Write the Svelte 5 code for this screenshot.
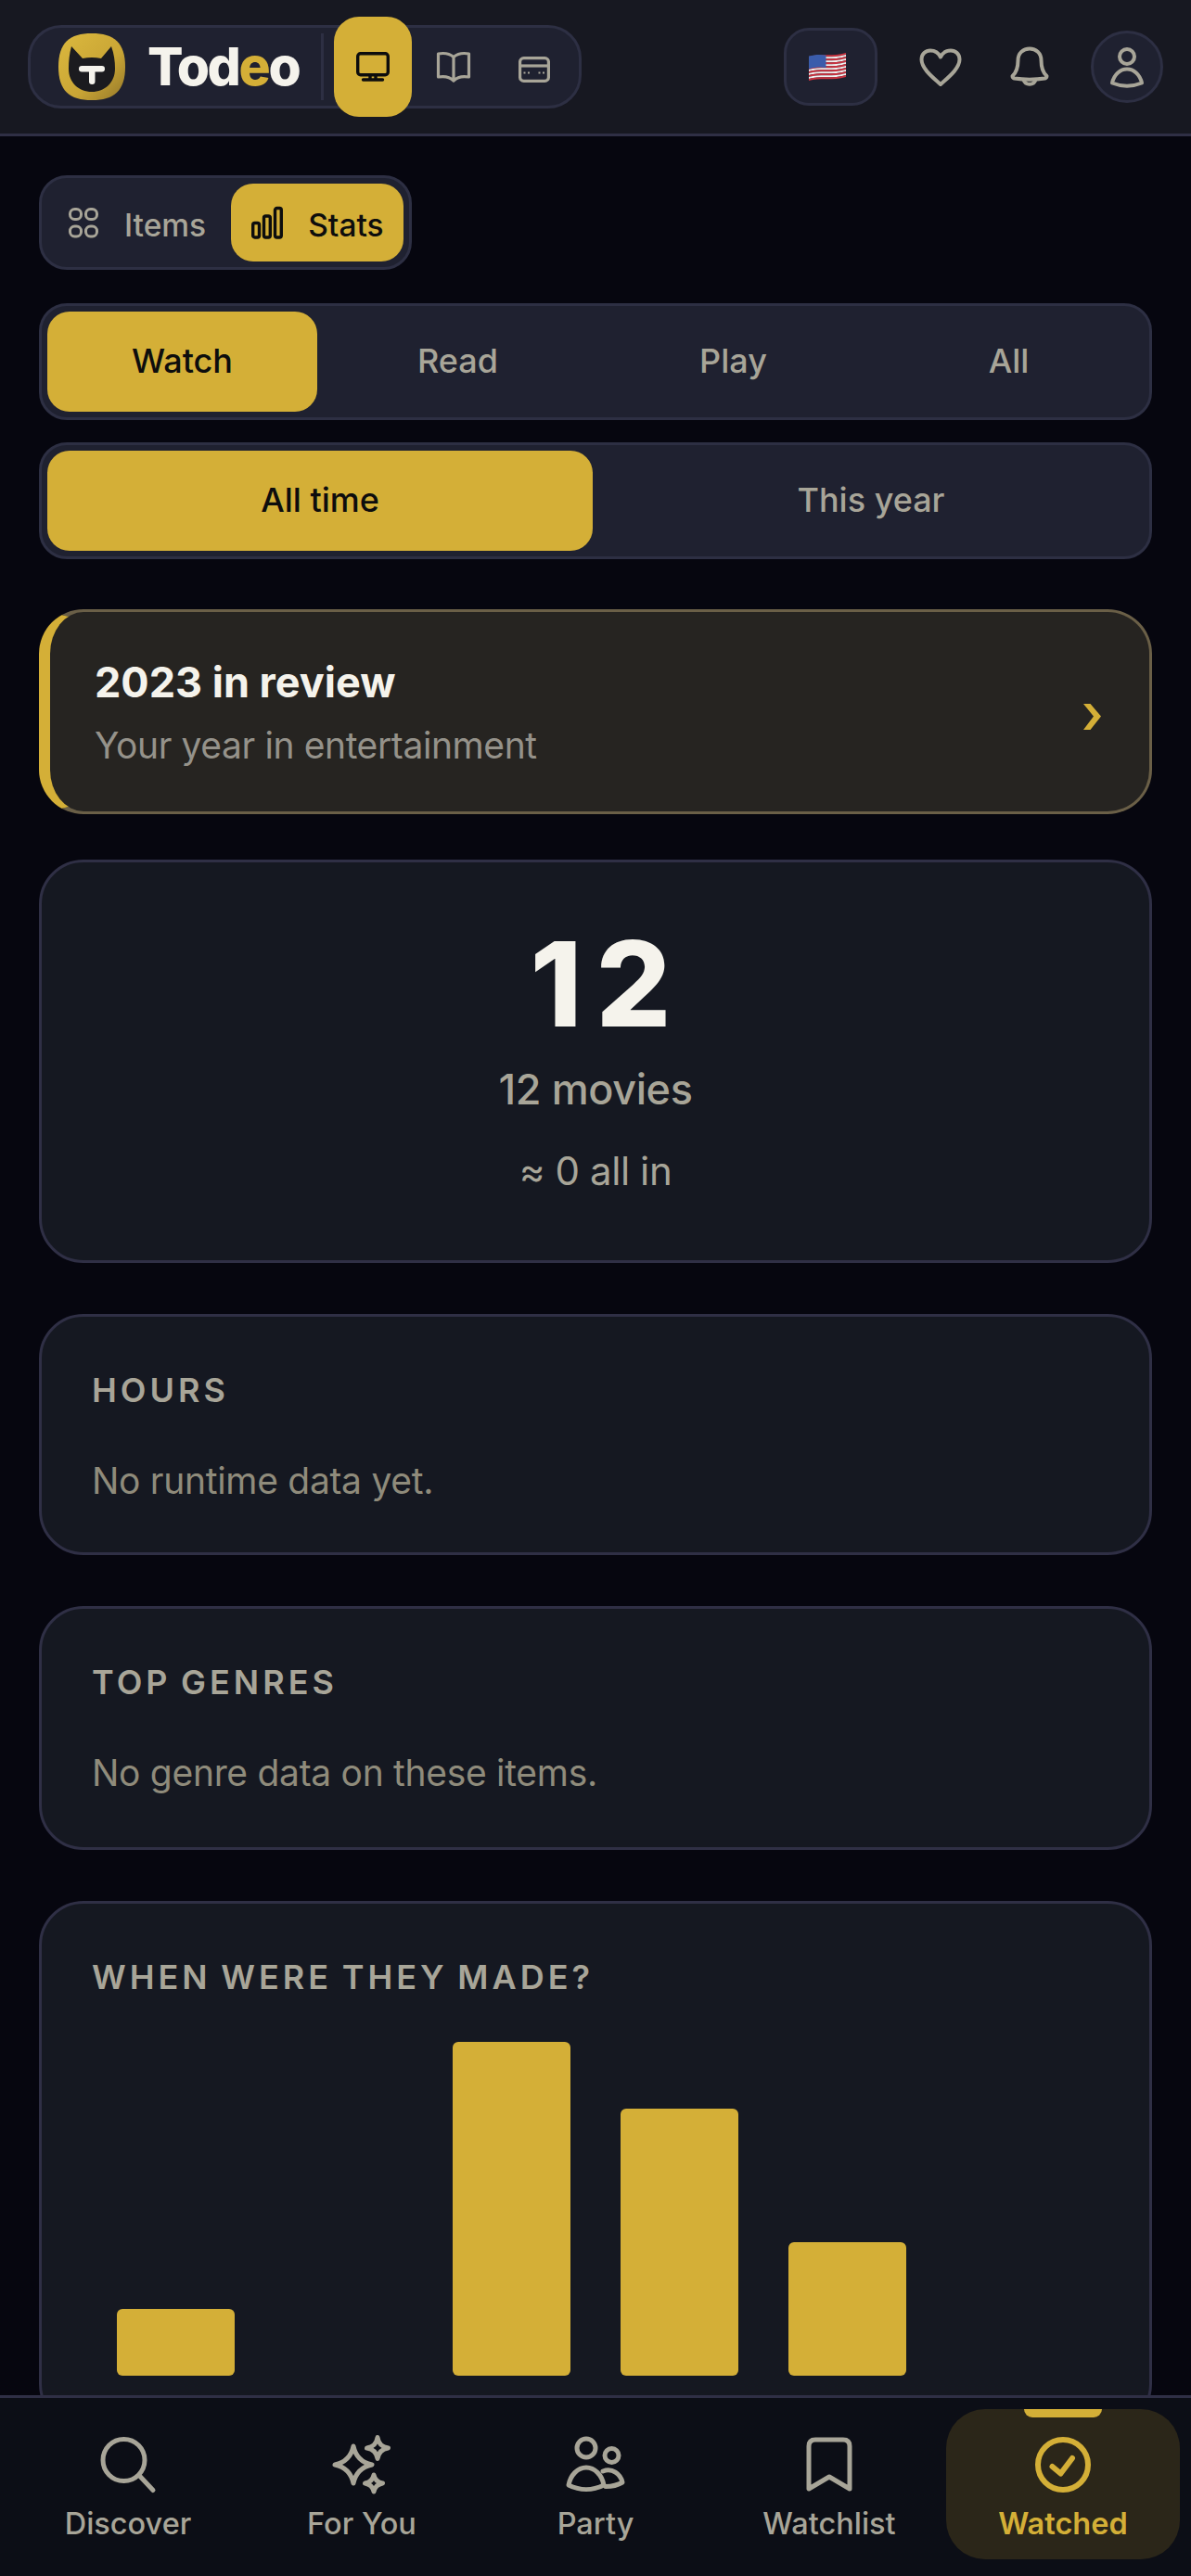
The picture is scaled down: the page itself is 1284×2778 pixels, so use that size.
<script>
  const kinds = [
    { label: 'Watch', active: true },
    { label: 'Read' },
    { label: 'Play' },
    { label: 'All' }
  ];
  const ranges = [{ label: 'All time', active: true }, { label: 'This year' }];
  // one column per decade, count of movies
  const decades = [1, 0, 5, 4, 2, 0];
  const unit = 72;

  // wavy stripes for the little flag
  const stripes = Array.from({ length: 13 }, (_, i) => {
    const y = 2 + i * 2;
    return {
      d: `M0 ${y + 2}C13 ${y - 1.6} 26 ${y + 2.4} 40 ${y - 2}V${y}C26 ${y + 4.4} 13 ${y + 0.4} 0 ${y + 4}Z`,
      fill: i % 2 ? '#f1eeee' : '#c9323f'
    };
  });
</script>

<div class="screen">
  <header class="top">
    <div class="brand">
      <svg class="logo" width="72" height="72" viewBox="0 0 72 72">
        <defs>
          <linearGradient id="lg" x1="0" y1="0" x2="1" y2="1">
            <stop offset="0" stop-color="#dcb93e" />
            <stop offset="0.6" stop-color="#c9a535" />
            <stop offset="1" stop-color="#94782a" />
          </linearGradient>
        </defs>
        <path d="M36 0C60 0 72 10 72 36C72 62 60 72 36 72C12 72 0 62 0 36C0 10 12 0 36 0Z" fill="url(#lg)" />
        <path d="M14 14L26 27Q36 25 46 27L57 14Q61 25 61 38C61 53 50 63 36 63C22 63 11 53 11 38Q11 25 14 14Z" fill="#1b1b1f" />
        <rect x="22" y="35" width="28" height="6.5" rx="3.2" fill="#f5f3ec" />
        <rect x="33" y="35" width="6.5" height="20" rx="3.2" fill="#f5f3ec" />
      </svg>
      <span class="word">Tod<span class="gold">e</span>o</span>
      <span class="rule"></span>
      <button class="mode on" aria-label="Watch">
        <svg width="48" height="48" viewBox="0 0 48 48" fill="none" stroke="#0d0d0d" stroke-width="3.4" stroke-linecap="round" stroke-linejoin="round">
          <rect x="7.7" y="9.7" width="32.6" height="23" rx="3" />
          <path d="M21 33v4.5M27 33v4.5M13.5 38h21" />
        </svg>
      </button>
      <button class="mode" aria-label="Read">
        <svg width="48" height="48" viewBox="0 0 48 48" fill="none" stroke="#a8a598" stroke-width="3.2" stroke-linejoin="round">
          <path d="M24 13.5C20 10 13 9 7.5 10V35C13 34 20 35 24 39C28 35 35 34 40.5 35V10C35 9 28 10 24 13.5ZM24 13.5V39" />
        </svg>
      </button>
      <button class="mode" aria-label="Play">
        <svg width="48" height="48" viewBox="0 0 48 48" fill="none" stroke="#a8a598" stroke-width="3.2">
          <rect x="8.6" y="14.6" width="30.8" height="24.8" rx="4" />
          <path d="M8.6 23H39.4" />
          <path d="M12.5 30.5h6.5M28.5 30.5h6.5" stroke-dasharray="2 2.5" stroke-width="2.2" />
        </svg>
      </button>
    </div>
    <div class="actions">
      <button class="flag" aria-label="Language">
        <svg width="40" height="30" viewBox="0 0 40 30">
          {#each stripes as s}
            <path d={s.d} fill={s.fill} />
          {/each}
          <path d="M0 3.6C6 1.8 13 1.6 18.5 2.6V16C13 15 6 15.4 0 17.4Z" fill="#3a5cab" />
        </svg>
      </button>
      <button class="plain heart" aria-label="Favourites">
        <svg width="54" height="54" viewBox="0 0 54 54" fill="none" stroke="#a8a598" stroke-width="4" stroke-linejoin="round">
          <path d="M27 46C20 39.5 6.5 29.5 6.5 19C6.5 13 11 9.5 16 9.5C21 9.5 25 12.5 27 16.5C29 12.5 33 9.5 38 9.5C43 9.5 47.5 13 47.5 19C47.5 29.5 34 39.5 27 46Z" />
        </svg>
      </button>
      <button class="plain bell" aria-label="Notifications">
        <svg width="54" height="54" viewBox="0 0 54 54" fill="none" stroke="#a8a598" stroke-width="4" stroke-linejoin="round" stroke-linecap="round">
          <path d="M8.5 37C13 33 14.5 28 14.5 20C14.5 12.5 20 7.5 27 7.5C34 7.5 39.5 12.5 39.5 20C39.5 28 41 33 45.5 37C45.5 38.5 45 39 43.5 39.5C33 41 21 41 10.5 39.5C9 39 8.5 38.5 8.5 37Z" />
          <path d="M20.5 41A6.8 6.8 0 0 0 33.5 41" />
        </svg>
      </button>
      <button class="avatar" aria-label="Profile">
        <svg width="54" height="54" viewBox="0 0 54 54" fill="none" stroke="#a8a598" stroke-width="4" stroke-linejoin="round">
          <circle cx="27" cy="16" r="8" />
          <path d="M11 44.5C13 35 20 29.5 27 29.5C34 29.5 41 35 43 44.5C33 48.5 21 48.5 11 44.5Z" />
        </svg>
      </button>
    </div>
  </header>

  <main class="page">
    <div class="switch">
      <button class="sw">
        <svg width="36" height="36" viewBox="0 0 36 36" fill="none" stroke="#a8a598" stroke-width="3">
          <rect x="3.5" y="3.5" width="12" height="11" rx="5" />
          <rect x="20.5" y="3.5" width="12" height="11" rx="5" />
          <rect x="3.5" y="22" width="12" height="11" rx="5" />
          <rect x="20.5" y="22" width="12" height="11" rx="5" />
        </svg>
        <span>Items</span>
      </button>
      <button class="sw on">
        <svg width="36" height="36" viewBox="0 0 36 36" fill="none" stroke="#0d0d0d" stroke-width="3.4">
          <rect x="2.7" y="18.5" width="6.8" height="15.5" rx="2" />
          <rect x="14.5" y="11" width="6.8" height="23" rx="2" />
          <rect x="26.5" y="2.5" width="6.8" height="31.5" rx="2" />
        </svg>
        <span>Stats</span>
      </button>
    </div>

    <div class="seg first">
      {#each kinds as k}
        <button class:on={k.active}>{k.label}</button>
      {/each}
    </div>
    <div class="seg second">
      {#each ranges as r}
        <button class:on={r.active}>{r.label}</button>
      {/each}
    </div>

    <a class="review" href="#review">
      <div class="review-text">
        <div class="review-title">2023 in review</div>
        <div class="review-sub">Your year in entertainment</div>
      </div>
      <svg class="chev" width="19" height="28" viewBox="0 0 19 28">
        <path d="M0 0h7.5L19 13.5 7.5 28H0L11 13.5z" fill="#d4af37" />
      </svg>
    </a>

    <section class="card hero">
      <div class="big">12</div>
      <div class="count">12 movies</div>
      <div class="approx">≈ 0 all in</div>
    </section>

    <section class="card hours">
      <h2>Hours</h2>
      <p>No runtime data yet.</p>
    </section>

    <section class="card genres">
      <h2>Top genres</h2>
      <p>No genre data on these items.</p>
    </section>

    <section class="card made">
      <h2>When were they made?</h2>
      <div class="chart">
        {#each decades as n}
          <div class="col">
            {#if n}<div class="bar" style="height: {n * unit}px"></div>{/if}
          </div>
        {/each}
      </div>
    </section>
  </main>

  <nav class="tabs">
    <button class="tab">
      <svg width="72" height="72" viewBox="0 0 72 72" fill="none" stroke="#a8a598" stroke-width="5" stroke-linecap="round">
        <circle cx="31.5" cy="33" r="22.5" />
        <path d="M48.5 50L63 65.5" />
      </svg>
      <span>Discover</span>
    </button>
    <button class="tab">
      <svg width="72" height="72" viewBox="0 0 72 72" fill="none" stroke="#a8a598" stroke-width="5" stroke-linejoin="round">
        <path d="M27 18Q30.5 34.5 47 38Q30.5 41.5 27 58Q23.5 41.5 7 38Q23.5 34.5 27 18Z" />
        <path d="M53 8.5Q54.5 18.5 64.5 20Q54.5 21.5 53 31.5Q51.5 21.5 41.5 20Q51.5 18.5 53 8.5Z" />
        <path d="M49 49Q50.5 56.5 58.5 58Q50.5 59.5 49 67Q47.5 59.5 39.5 58Q47.5 56.5 49 49Z" />
      </svg>
      <span>For You</span>
    </button>
    <button class="tab">
      <svg width="72" height="72" viewBox="0 0 72 72" fill="none" stroke="#a8a598" stroke-width="5" stroke-linejoin="round" stroke-linecap="round">
        <circle cx="26" cy="20" r="10" />
        <circle cx="53.5" cy="28" r="7.5" />
        <path d="M7 60C9 49 17 41 26 41C35 41 43 49 45 60C33 66 19 66 7 60Z" />
        <path d="M44 45C54 41 63 48 65 57C60 60 54 61.5 47 61.5" />
      </svg>
      <span>Party</span>
    </button>
    <button class="tab">
      <svg width="72" height="72" viewBox="0 0 72 72" fill="none" stroke="#a8a598" stroke-width="5" stroke-linejoin="round">
        <path d="M14 64V18Q14 11 21 11H51Q58 11 58 18V64L36 51Z" />
      </svg>
      <span>Watchlist</span>
    </button>
    <button class="tab on">
      <i class="mark"></i>
      <svg width="72" height="72" viewBox="0 0 72 72" fill="none" stroke="#d4af37" stroke-width="6" stroke-linecap="round" stroke-linejoin="round">
        <circle cx="36" cy="38" r="27" />
        <path d="M24.5 40L33.5 47.5L46 31" />
      </svg>
      <span>Watched</span>
    </button>
  </nav>
</div>

<style>
  :global(body) {
    background: #06060f;
  }
  .screen {
    height: 2778px;
    display: flex;
    flex-direction: column;
    overflow: hidden;
    background: #06060f;
    font-family: Inter, "Liberation Sans", sans-serif;
    color: #a8a598;
  }
  button {
    font: inherit;
    color: inherit;
    background: none;
    border: 0;
    padding: 0;
  }
  svg {
    display: block;
    flex: none;
  }

  .top {
    flex: none;
    height: 147px;
    box-sizing: border-box;
    display: flex;
    align-items: center;
    justify-content: space-between;
    padding: 0 30px;
    background: #171821;
    border-bottom: 3px solid #2f2f45;
  }
  .brand {
    display: flex;
    align-items: center;
    box-sizing: border-box;
    width: 597px;
    height: 90px;
    padding-left: 30px;
    background: #1f2130;
    border: 3px solid #2d2f43;
    border-radius: 36px;
  }
  .word {
    margin-left: 24px;
    width: 164px;
    font-size: 57px;
    line-height: 72px;
    font-weight: 800;
    letter-spacing: -2.4px;
    color: #f5f3ec;
    white-space: nowrap;
  }
  .gold {
    color: #d4af37;
  }
  .rule {
    width: 3px;
    height: 72px;
    margin-left: 23px;
    margin-right: 11px;
    background: #2d2f43;
  }
  .mode {
    flex: none;
    width: 84px;
    height: 108px;
    margin-right: 3px;
    border-radius: 27px;
    display: flex;
    align-items: center;
    justify-content: center;
  }
  .mode.on {
    background: #d4af37;
  }
  .actions {
    display: flex;
    align-items: center;
  }
  .flag {
    box-sizing: border-box;
    width: 101px;
    height: 84px;
    display: flex;
    align-items: center;
    justify-content: center;
    padding-right: 8px;
    background: #1f2130;
    border: 3px solid #2d2f43;
    border-radius: 27px;
  }
  .plain {
    width: 54px;
    height: 54px;
  }
  .heart {
    margin-left: 41px;
  }
  .bell {
    margin-left: 42px;
  }
  .avatar {
    box-sizing: border-box;
    width: 78px;
    height: 78px;
    margin-left: 39px;
    display: flex;
    align-items: center;
    justify-content: center;
    background: #1f2130;
    border: 3px solid #2d2f43;
    border-radius: 50%;
  }

  .page {
    flex: 1;
    min-height: 0;
    overflow: hidden;
    padding: 42px 42px 0;
  }
  .switch {
    display: inline-flex;
    vertical-align: top;
    box-sizing: border-box;
    height: 102px;
    padding: 6px;
    gap: 6px;
    background: #1f2130;
    border: 3px solid #2d2f43;
    border-radius: 30px;
  }
  .sw {
    display: flex;
    align-items: center;
    gap: 26px;
    padding: 0 21px;
    border-radius: 24px;
    font-size: 33.5px;
    font-weight: 500;
  }
  .sw span {
    margin-top: 5px;
  }
  .sw.on {
    background: #d4af37;
    color: #0d0d0d;
  }

  .seg {
    display: flex;
    box-sizing: border-box;
    height: 126px;
    padding: 6px;
    gap: 6px;
    background: #1f2130;
    border: 3px solid #2d2f43;
    border-radius: 30px;
  }
  .seg.first {
    margin-top: 36px;
  }
  .seg.second {
    margin-top: 24px;
  }
  .seg button {
    flex: 1;
    padding-bottom: 3px;
    border-radius: 24px;
    font-size: 36px;
    font-weight: 500;
  }
  .seg button.on {
    background: #d4af37;
    color: #0d0d0d;
  }

  .review {
    display: flex;
    align-items: center;
    justify-content: space-between;
    box-sizing: border-box;
    height: 221px;
    margin-top: 54px;
    padding: 0 52px 0 48px;
    background: #262421;
    border: 3px solid #6a5f47;
    border-left: 12px solid #d4af37;
    border-radius: 48px;
    text-decoration: none;
  }
  .review-text {
    margin-top: 4px;
  }
  .review-title {
    font-size: 45px;
    line-height: 54px;
    font-weight: 700;
    color: #f5f3ec;
  }
  .review-sub {
    margin-top: 14px;
    font-size: 39px;
    line-height: 54px;
    letter-spacing: -0.4px;
    color: #95928a;
  }
  .chev {
    margin-top: 11px;
  }

  .card {
    box-sizing: border-box;
    background: #151821;
    border: 3px solid #2f2f45;
    border-radius: 48px;
  }
  .hero {
    height: 435px;
    margin-top: 49px;
    padding-top: 68px;
    text-align: center;
  }
  .big {
    padding-left: 26px;
    font-size: 127px;
    line-height: 126px;
    font-weight: 800;
    letter-spacing: 15px;
    color: #f5f3ec;
  }
  .count {
    margin-top: 21px;
    font-size: 45px;
    line-height: 60px;
    font-weight: 500;
    letter-spacing: -0.4px;
  }
  .approx {
    margin-top: 31px;
    font-size: 42px;
    line-height: 54px;
    letter-spacing: -0.4px;
  }
  .hours,
  .genres,
  .made {
    margin-top: 55px;
    padding: 58px 54px 0;
  }
  .hours {
    height: 260px;
  }
  .genres {
    height: 263px;
  }
  h2 {
    margin: 0;
    font-size: 36px;
    line-height: 42px;
    font-weight: 600;
    letter-spacing: 4px;
    word-spacing: -2.5px;
    text-transform: uppercase;
  }
  .card p {
    margin: 50px 0 0;
    font-size: 39px;
    line-height: 54px;
    letter-spacing: -0.3px;
    color: #8f8b7b;
  }
  .chart {
    display: grid;
    grid-template-columns: repeat(6, 1fr);
    align-items: end;
    height: 360px;
    margin: 49px 0 54px;
  }
  .col {
    padding: 0 27px;
  }
  .bar {
    background: #d4af37;
    border-radius: 6px;
  }

  .tabs {
    flex: none;
    height: 195px;
    box-sizing: border-box;
    display: grid;
    grid-template-columns: repeat(5, 1fr);
    padding: 12px 12px 18px;
    background: #0c0e16;
    border-top: 3px solid #2f2f45;
  }
  .tab {
    position: relative;
    display: flex;
    flex-direction: column;
    align-items: center;
    padding-top: 22px;
    border-radius: 42px;
    font-size: 32.5px;
    line-height: 42px;
    font-weight: 500;
  }
  .tab span {
    margin-top: 9px;
  }
  .tab.on {
    background: #2b2619;
    color: #d4af37;
    font-weight: 600;
  }
  .mark {
    position: absolute;
    top: 0;
    left: 84px;
    width: 84px;
    height: 9px;
    background: #d4af37;
    border-radius: 0 0 9px 9px;
  }
</style>
